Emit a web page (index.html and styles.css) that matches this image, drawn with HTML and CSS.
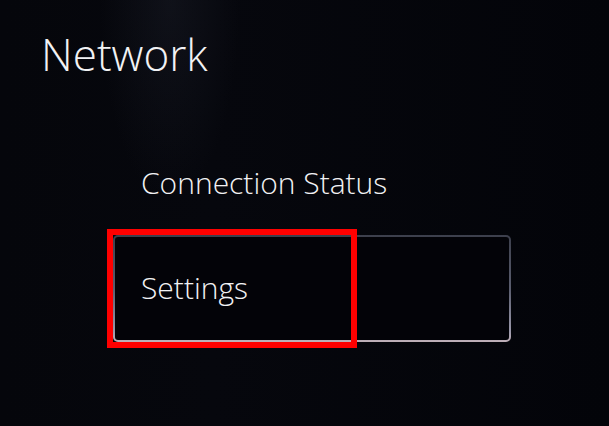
FILE: index.html
```html
<!DOCTYPE html>
<html lang="en">
<head>
<meta charset="utf-8">
<title>Network</title>
<link rel="stylesheet" href="styles.css">
</head>
<body>
<div class="screen">
  <h1 class="title">Network</h1>
  <ul class="menu">
    <li class="item">Connection Status</li>
    <li class="item focused">Settings<span class="highlight"></span></li>
  </ul>
</div>
</body>
</html>
```
FILE: styles.css
```css
html, body {
  margin: 0;
  padding: 0;
  height: 100%;
}
body {
  background: #04050a;
  font-family: "Open Sans", "Noto Sans", sans-serif;
  color: #f2f2f4;
  overflow: hidden;
}
.screen {
  width: 609px;
  height: 426px;
  background:
    radial-gradient(ellipse 70px 200px at 170px 0px, rgba(30,33,44,0.4), rgba(20,22,30,0) 100%),
    linear-gradient(to right, #05060b 0%, #06070d 35%, #030409 100%);
  display: flex;
  flex-direction: column;
}
.title {
  margin: 0;
  padding: 23px 0 0 41px;
  font-size: 44px;
  font-weight: 300;
  line-height: 62px;
  letter-spacing: 0;
}
.menu {
  list-style: none;
  margin: 44px 0 0 113px;
  padding: 0;
  width: 398px;
}
.item {
  position: relative;
  box-sizing: border-box;
  height: 106px;
  padding-left: 26px;
  display: flex;
  align-items: center;
  font-size: 30px;
  font-weight: 300;
  letter-spacing: 0;
  border: 2px solid transparent;
  border-radius: 5px;
}
.item.focused {
  height: 107px;
  background:
    linear-gradient(#030308, #030308) padding-box,
    linear-gradient(to bottom, #3c3f4c 0%, #5a5d6e 50%, #9a98aa 90%, #c0b0b8 100%) border-box;
  padding-bottom: 3px;
}
.highlight {
  position: absolute;
  left: -8px;
  top: -8px;
  width: 250px;
  height: 119px;
  box-sizing: border-box;
  border: 6px solid #ff0000;
}
```
